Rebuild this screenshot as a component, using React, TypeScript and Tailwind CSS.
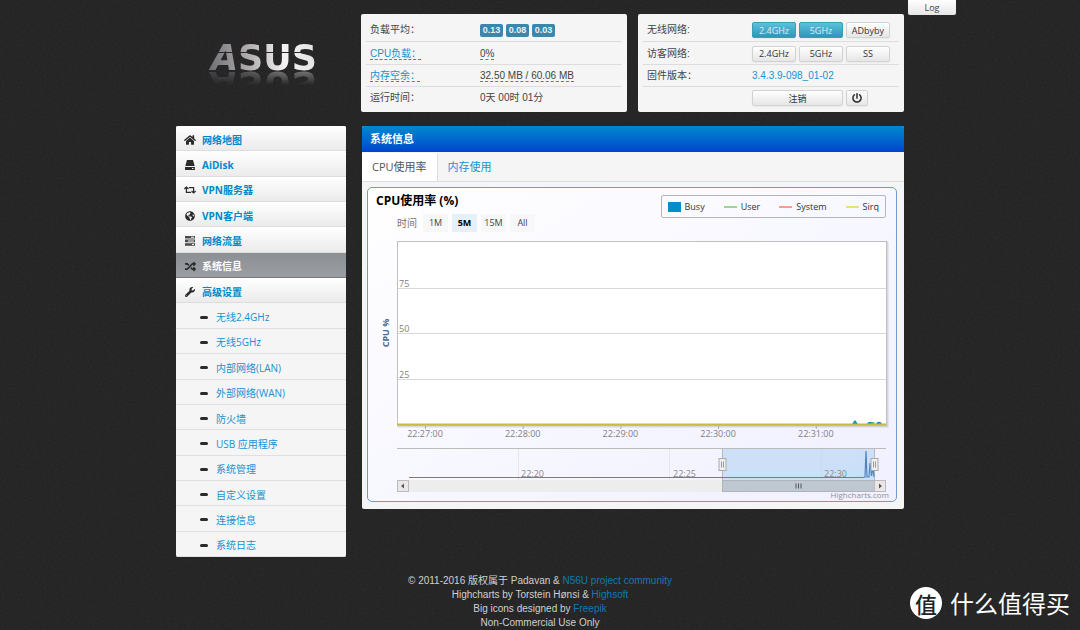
import { useState, type ReactNode } from "react";
import { FaHome, FaRetweet, FaGlobeAmericas, FaRandom, FaWrench, FaPowerOff } from "react-icons/fa";

const ARIAL = "font-['Liberation_Sans','Noto_Sans_CJK_SC',sans-serif]";
const HUMANIST = "font-['Open_Sans','Noto_Sans_CJK_SC',sans-serif]";

function HddIcon() {
    return (
        <svg viewBox="0 0 12 12" className="w-3 h-3" fill="currentColor" aria-hidden="true">
            <path d="M3 1h6l1.7 6H1.3z" />
            <path d="M1 8h10v3H1zM8 9v1h1V9zM9.6 9v1h.7V9z" fillRule="evenodd" />
        </svg>
    );
}

function TasksIcon() {
    return (
        <svg viewBox="0 0 12 12" className="w-3 h-3" fill="currentColor" aria-hidden="true">
            <path d="M1 1h10v2.6H1zM7 1.8v1h3v-1zM1 4.6h10v2.6H1zM4 5.4v1h6v-1zM1 8.2h10v2.6H1zM8 9v1h2V9z" fillRule="evenodd" opacity=".85" />
        </svg>
    );
}

const menu: { label: string; icon: ReactNode }[] = [
    { label: "网络地图", icon: <FaHome className="w-3 h-3" /> },
    { label: "AiDisk", icon: <HddIcon /> },
    { label: "VPN服务器", icon: <FaRetweet className="w-3 h-3" /> },
    { label: "VPN客户端", icon: <FaGlobeAmericas className="w-[10px] h-[10px]" /> },
    { label: "网络流量", icon: <TasksIcon /> },
    { label: "系统信息", icon: <FaRandom className="w-[11px] h-[11px]" /> },
    { label: "高级设置", icon: <FaWrench className="w-[10px] h-[10px]" /> },
];

const subMenu = [
    "无线2.4GHz",
    "无线5GHz",
    "内部网络(LAN)",
    "外部网络(WAN)",
    "防火墙",
    "USB 应用程序",
    "系统管理",
    "自定义设置",
    "连接信息",
    "系统日志",
];

function Logo() {
    return (
        <svg viewBox="0 0 170 98" className="w-[170px] shrink-0" role="img" aria-label="ASUS">
            <defs>
                <linearGradient id="metal" gradientUnits="userSpaceOnUse" x1="30" y1="54" x2="142" y2="42">
                    <stop offset="0" stopColor="#6b6b70" />
                    <stop offset=".4" stopColor="#b3b0b2" />
                    <stop offset=".7" stopColor="#f4f2f3" />
                    <stop offset="1" stopColor="#e2e2e2" />
                </linearGradient>
                <linearGradient id="fade" gradientUnits="userSpaceOnUse" x1="0" y1="57" x2="0" y2="71">
                    <stop offset="0" stopColor="#fff" stopOpacity=".4" />
                    <stop offset="1" stopColor="#fff" stopOpacity="0" />
                </linearGradient>
                <mask id="reflection" maskUnits="userSpaceOnUse" x="0" y="57" width="170" height="14">
                    <rect y="57" width="170" height="14" fill="url(#fade)" />
                </mask>
                <mask id="slit" maskUnits="userSpaceOnUse" x="0" y="0" width="170" height="98">
                    <rect width="170" height="98" fill="#fff" />
                    <path d="M30 38.5H146" stroke="#000" />
                </mask>
                <g id="mark" mask="url(#slit)">
                    <text x="35" y="56" fontSize="35" fontWeight="700" fontFamily="DejaVu Sans, sans-serif" fill="url(#metal)">
                        <tspan fontStyle="italic">A</tspan>SUS
                    </text>
                </g>
            </defs>
            <use href="#mark" />
            <g mask="url(#reflection)" aria-hidden="true">
                <use href="#mark" transform="translate(0 114) scale(1 -1)" />
            </g>
        </svg>
    );
}

function SmallButton({ children, active, wide, label }: { children: ReactNode; active?: boolean; wide?: string; label?: string }) {
    return (
        <button
            type="button"
            aria-label={label}
            className={`flex items-center justify-center h-4 rounded-xs border text-[9px] leading-none shadow-xs ${HUMANIST} ${wide || "w-11"} ${
                active
                    ? "bg-linear-to-b from-[#5bc0de] to-[#2f96b4] border-[#3a9dba] text-white/80"
                    : "bg-linear-to-b from-white to-[#e6e6e6] border-[#d2d2d2] text-[#333]"
            }`}
        >
            {children}
        </button>
    );
}

function StatusRow({ label, children, tall, last }: { label: ReactNode; children: ReactNode; tall?: boolean; last?: boolean }) {
    return (
        <tr className={`${tall ? "h-[23px]" : "h-[22px]"} ${last ? "" : "border-b border-[#ddd]"}`}>
            <th scope="row" className="pl-1 pt-[2px] text-left font-normal">{label}</th>
            <td className="pt-[2px]">{children}</td>
        </tr>
    );
}

function Sidebar() {
    return (
        <nav className={`w-[170px] shrink-0 rounded-xs overflow-hidden bg-[#f5f5f5] text-[10px] leading-4 ${HUMANIST}`}>
            <ul className="grid auto-rows-fr min-h-[431px]">
                {menu.map((item) => {
                    const active = item.label === "系统信息";
                    return (
                        <li key={item.label} className="flex">
                            <a
                                href="#"
                                aria-current={active ? "page" : undefined}
                                className={`flex flex-1 items-center gap-[6px] pl-2 pt-[3px] border-b font-bold ${
                                    active
                                        ? "bg-linear-to-b from-[#8c8f94] to-[#9a9da2] border-[#77797c] text-white"
                                        : "bg-linear-to-b from-white to-[#ebebeb] border-[#ddd] text-[#08c]"
                                }`}
                            >
                                <span className="flex w-3 justify-center text-[#2b2b2b]">{item.icon}</span>
                                {item.label}
                            </a>
                        </li>
                    );
                })}
                {subMenu.map((label) => (
                    <li key={label} className="flex">
                        <a href="#" className="flex flex-1 items-center gap-2 pl-6 pt-[3px] border-b border-[#e0e0e0] text-[#1593d3]">
                            <span className="w-2 h-[3px] rounded-xs bg-[#2b2b2b]" />
                            {label}
                        </a>
                    </li>
                ))}
            </ul>
        </nav>
    );
}

const legend = [
    { name: "User", color: "bg-[#9ad694]" },
    { name: "System", color: "bg-[#f59e8c]" },
    { name: "Sirq", color: "bg-[#e6e46c]" },
];

function CpuPlot() {
    const times = ["22:27:00", "22:28:00", "22:29:00", "22:30:00", "22:31:00"];
    return (
        <svg viewBox="0 0 528 265" className="block w-full" fontFamily="Open Sans, sans-serif" fontSize="9" role="img" aria-label="CPU使用率">
            <rect x="30.5" y="6.5" width="489" height="184" fill="none" stroke="#000" strokeOpacity=".12" strokeWidth="2" />
            <rect x="29.5" y="5.5" width="489" height="184" fill="#fff" stroke="#c0c0c0" />
            {[52.5, 97.5, 143.5].map((y, i) => (
                <g key={y}>
                    <path d={`M30 ${y}H518`} stroke="#d8d8d8" />
                    <text x="31" y={y - 2} fill="#808080">{75 - i * 25}</text>
                </g>
            ))}
            <text x="21" y="97" textAnchor="middle" transform="rotate(-90 21 97)" fill="#4d6c91" fontWeight="700">CPU %</text>

            {/* series */}
            <path d="M484 188l3-4 3 4zM499 188c1-3 6-3 7 0zM508 188c1-3 5-3 6 0z" fill="#058dc7" />
            <path d="M502 187h5" stroke="#50b432" />
            <path d="M29 188.5H518" stroke="#c9bc45" strokeWidth="2" />

            {times.map((t, i) => (
                <g key={t}>
                    <path d={`M${57.5 + i * 97.7} 190v3`} stroke="#aaa" />
                    <text x={57 + i * 97.7} y="201" textAnchor="middle" fill="#808080">{t}</text>
                </g>
            ))}

            {/* navigator */}
            <path d="M150.5 213v31M301.5 213v31M453.5 213v31" stroke="#e6e6ea" />
            <rect x="354" y="213" width="152" height="31" fill="#b8d6f5" fillOpacity=".65" />
            <path d="M29 212.5H518" stroke="#bbb" />
            <path d="M354.5 213v31M506.5 213v31" stroke="#b4b8c0" />
            <g fill="#858a92">
                <text x="153" y="241">22:20</text>
                <text x="305" y="241">22:25</text>
                <text x="456" y="241">22:30</text>
            </g>
            <path d="M41 241.5H495L497 241L498 215L499 241H501L502 227L503.5 240L505 232L506 241" fill="none" stroke="#4f84bd" strokeWidth="1.2" />
            <rect x="41" y="244" width="465" height="12" fill="#ededed" />
            <rect x="354.5" y="244.5" width="152" height="11" fill="#bfc8d1" stroke="#aeb4bb" />
            <path d="M428 247.5v5M430.5 247.5v5M433 247.5v5" stroke="#555" />
            <g fill="#ebe7e8" stroke="#bbb">
                <rect x="29.5" y="244.5" width="11" height="11" />
                <rect x="506.5" y="244.5" width="11" height="11" />
            </g>
            <path d="M36 247.5v5l-3-2.5zM511 247.5v5l3-2.5z" fill="#555" />
            {[354.5, 506.5].map((x) => (
                <g key={x} stroke="#aaa">
                    <rect x={x - 3.5} y="222.5" width="7" height="12" fill="#f0eeee" />
                    <path d={`M${x - 1} 225.5v6M${x + 1} 225.5v6`} stroke="#999" />
                </g>
            ))}
            <a href="#">
                <text x="521" y="262" textAnchor="end" fontSize="8" fill="#909090">Highcharts.com</text>
            </a>
        </svg>
    );
}

export default function App() {
    const [tab, setTab] = useState("CPU使用率");
    const [range, setRange] = useState("5M");

    return (
        <div className={`relative min-h-screen bg-[#222] px-4 text-[10px] leading-4 text-[#444] ${ARIAL}`}>
            <svg className="absolute inset-0 w-full h-full opacity-6 pointer-events-none" aria-hidden="true">
                <filter id="grain">
                    <feTurbulence type="fractalNoise" baseFrequency=".5" numOctaves="2" stitchTiles="stitch" />
                    <feColorMatrix type="saturate" values="0" />
                </filter>
                <rect width="100%" height="100%" filter="url(#grain)" />
            </svg>

            <div className="relative mx-auto max-w-[728px]">
                <button
                    type="button"
                    className={`absolute top-0 left-full ml-1 w-12 h-[15px] rounded-b-xs bg-linear-to-b from-white to-[#e6e6e6] text-[9px] leading-none ${HUMANIST}`}
                >
                    Log
                </button>

                <header className="flex pt-[14px]">
                    <Logo />
                    <div className="grid flex-1 grid-cols-2 gap-[11px] ml-[15px]">
                        <section className="rounded-xs bg-[#f5f5f5] px-[5px] pt-1">
                            <table className="w-full border-collapse">
                                <colgroup>
                                    <col className="w-[114px]" />
                                    <col />
                                </colgroup>
                                <tbody>
                                    <StatusRow label="负载平均：" tall>
                                        <span className="flex gap-[3px]">
                                            {["0.13", "0.08", "0.03"].map((v) => (
                                                <span key={v} className="w-[23px] rounded-xs bg-[#3a87ad] text-center text-[9px] font-bold leading-[13px] text-[#e8f2f7]">
                                                    {v}
                                                </span>
                                            ))}
                                        </span>
                                    </StatusRow>
                                    <StatusRow label={<a href="#" className="border-b border-dashed border-[#1593d3] text-[#1593d3]">CPU负载：</a>} tall>
                                        <span className="border-b border-dashed border-[#1593d3]">0%</span>
                                    </StatusRow>
                                    <StatusRow label={<a href="#" className="border-b border-dashed border-[#1593d3] text-[#1593d3]">内存空余：</a>}>
                                        <span className="border-b border-dashed border-[#1593d3]">32.50 MB / 60.06 MB</span>
                                    </StatusRow>
                                    <StatusRow label="运行时间：" last>0天 00时 01分</StatusRow>
                                </tbody>
                            </table>
                        </section>

                        <section className="rounded-xs bg-[#f5f5f5] px-[5px] pt-1">
                            <table className="w-full border-collapse">
                                <colgroup>
                                    <col className="w-[109px]" />
                                    <col />
                                </colgroup>
                                <tbody>
                                    <StatusRow label="无线网络:" tall>
                                        <div className="flex gap-[3px]">
                                            <SmallButton active>2.4GHz</SmallButton>
                                            <SmallButton active>5GHz</SmallButton>
                                            <SmallButton>ADbyby</SmallButton>
                                        </div>
                                    </StatusRow>
                                    <StatusRow label="访客网络:" tall>
                                        <div className="flex gap-[3px]">
                                            <SmallButton>2.4GHz</SmallButton>
                                            <SmallButton>5GHz</SmallButton>
                                            <SmallButton>SS</SmallButton>
                                        </div>
                                    </StatusRow>
                                    <StatusRow label="固件版本：">
                                        <a href="#" className="text-[#1593d3]">3.4.3.9-098_01-02</a>
                                    </StatusRow>
                                    <StatusRow label="" last>
                                        <div className="flex gap-[3px]">
                                            <SmallButton wide="w-[91px]">注销</SmallButton>
                                            <SmallButton wide="w-[22px]" label="重启">
                                                <FaPowerOff className="w-[10px] h-[10px]" />
                                            </SmallButton>
                                        </div>
                                    </StatusRow>
                                </tbody>
                            </table>
                        </section>
                    </div>
                </header>

                <div className="flex items-start gap-4 mt-[14px]">
                    <Sidebar />

                    <main className={`flex-1 min-w-0 rounded-xs overflow-hidden bg-[#f5f5f5] pb-[7px] ${HUMANIST}`}>
                        <h1 className="px-2 bg-linear-to-b from-[#0088cc] to-[#0044cc] text-[11px] leading-[26px] font-bold text-white">
                            系统信息
                        </h1>
                        <div role="tablist" className="flex border-b border-[#ddd] pt-px">
                            {["CPU使用率", "内存使用"].map((name) => (
                                <button
                                    key={name}
                                    type="button"
                                    role="tab"
                                    aria-selected={tab === name}
                                    onClick={() => setTab(name)}
                                    className={`px-[10px] text-[11px] leading-7 rounded-t-xs border-r ${
                                        tab === name ? "bg-white border-[#ddd] text-[#555]" : "border-transparent text-[#1593d3]"
                                    }`}
                                >
                                    {name}
                                </button>
                            ))}
                        </div>

                        <div className="mt-[5px] ml-[5px] mr-[7px] rounded-[5px] border border-[#6f9bcc] bg-linear-to-br from-white to-[#f0f0ff] text-black">
                            <div className="flex items-start justify-between pt-1 pb-1 px-2">
                                <div>
                                    <h2 className="text-[12px] leading-[18px] font-bold">{"CPU使用率 (%)"}</h2>
                                    <div className="flex items-center gap-1 mt-1 pl-[21px] text-[9px] text-[#444]">
                                        <span className="mr-[2px] text-[10px] text-[#777]">时间</span>
                                        {["1M", "5M", "15M", "All"].map((r) => (
                                            <button
                                                key={r}
                                                type="button"
                                                onClick={() => setRange(r)}
                                                className={`w-[25px] h-[18px] leading-[18px] ${range === r ? "bg-[#e7f0f9] font-bold text-black" : "bg-[#f7f7f7]"}`}
                                            >
                                                {r}
                                            </button>
                                        ))}
                                    </div>
                                </div>
                                <ul className="flex items-center gap-[19px] mt-[3px] mr-[2px] h-[23px] px-[6px] rounded-xs border border-[#b5b5bd] text-[9px] text-[#333]">
                                    <li className="flex items-center gap-1">
                                        <span className="w-[13px] h-[10px] bg-[#058dc7]" />
                                        Busy
                                    </li>
                                    {legend.map((s) => (
                                        <li key={s.name} className="flex items-center gap-1">
                                            <span className={`w-[13px] h-[2px] ${s.color}`} />
                                            {s.name}
                                        </li>
                                    ))}
                                </ul>
                            </div>
                            <CpuPlot />
                        </div>
                    </main>
                </div>

                <footer className="mt-[17px] text-center leading-[14px] text-[#d0d0d0]">
                    <p>© 2011-2016 版权属于 Padavan &amp; <a href="#" className="text-[#0a7bb5]">N56U project community</a></p>
                    <p>Highcharts by Torstein Hønsi &amp; <a href="#" className="text-[#0a7bb5]">Highsoft</a></p>
                    <p>Big icons designed by <a href="#" className="text-[#0a7bb5]">Freepik</a></p>
                    <p>Non-Commercial Use Only</p>
                </footer>
            </div>

            <div className="absolute right-[10px] bottom-[10px] flex items-center gap-2 text-white font-['Noto_Sans_CJK_SC',sans-serif]">
                <span className="flex w-8 h-8 items-center justify-center rounded-full bg-white text-[22px] leading-8 font-medium text-[#222]">值</span>
                <span className="text-[24px] leading-[34px]">什么值得买</span>
            </div>
        </div>
    );
}
